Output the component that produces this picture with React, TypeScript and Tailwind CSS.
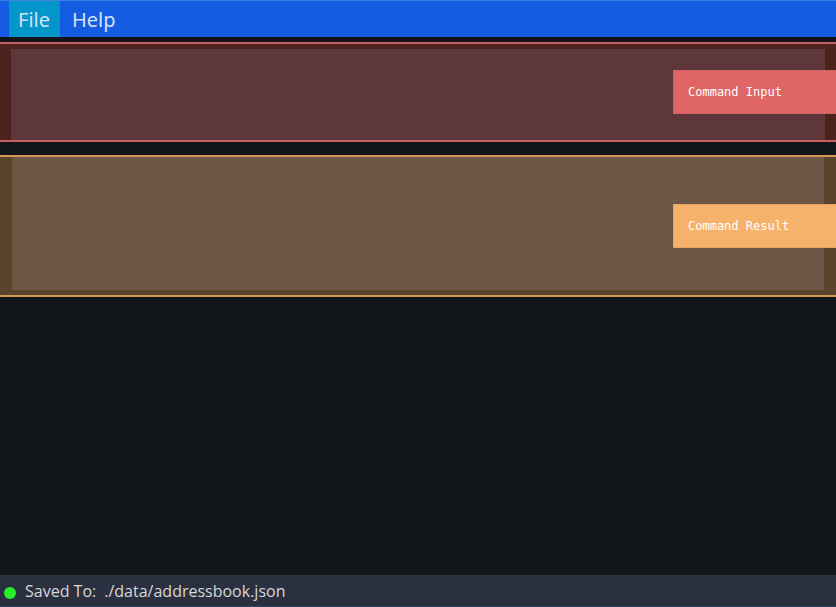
import type { ReactNode } from "react";

function Callout({ htmlFor, tone, children }: { htmlFor: string; tone: string; children: ReactNode }) {
  return (
    <label
      htmlFor={htmlFor}
      className={`absolute right-0 flex h-11 w-[163px] items-center border px-[14px] font-['DejaVu_Sans_Mono','Liberation_Mono',monospace] text-[12px] leading-4 text-white ${tone}`}
    >
      {children}
    </label>
  );
}

export default function App() {
  return (
    <div className="flex min-h-screen flex-col bg-[#121519] font-['Open_Sans','Noto_Sans',sans-serif]">
      <nav className="flex border-t border-[#3c83e0] bg-[#145de3] px-[9px] font-['Noto_Sans','Open_Sans',sans-serif] text-[20px] text-[#d5e2f5]">
        <button type="button" className="bg-[#0296ca] px-[9px] pt-0.5 pr-2.5 leading-[34px]">
          File
        </button>
        <button type="button" className="px-3 pt-0.5 leading-[34px]">
          Help
        </button>
      </nav>

      <main className="flex flex-1 flex-col gap-[13px] pt-[5px]">
        <section className="relative flex h-[100px] border-y-2 border-[#c85f60] bg-[#4c221c] px-[11px] pt-[5px]">
          <input
            id="command-input"
            type="text"
            className="min-w-0 flex-1 bg-[#5e373a] px-3 text-white outline-none"
          />
          <Callout htmlFor="command-input" tone="top-[26px] border-[#d06062] border-r-[#e06666] bg-[#e06666]">
            Command Input
          </Callout>
        </section>

        <section className="relative flex h-[142px] border-y-2 border-[#d39855] bg-[#5b432b] px-3 pb-[5px]">
          <textarea
            id="command-result"
            readOnly
            className="min-w-0 flex-1 resize-none bg-[#6c5746] p-3 text-white outline-none"
          />
          <Callout htmlFor="command-result" tone="top-[47px] border-[#e3a366] border-r-[#f6b26b] bg-[#f6b26b]">
            Command Result
          </Callout>
        </section>
      </main>

      <footer className="flex h-8 items-center gap-[9px] border-b border-[#30405f] bg-[#2a3040] px-1 text-[16px] leading-6 text-[#d6d7d9]">
        <span className="mt-1 size-3 rounded-full bg-[#27ee28]" />
        <p className="flex gap-2">
          <span>Saved To:</span>
          <span>./data/addressbook.json</span>
        </p>
      </footer>
    </div>
  );
}
